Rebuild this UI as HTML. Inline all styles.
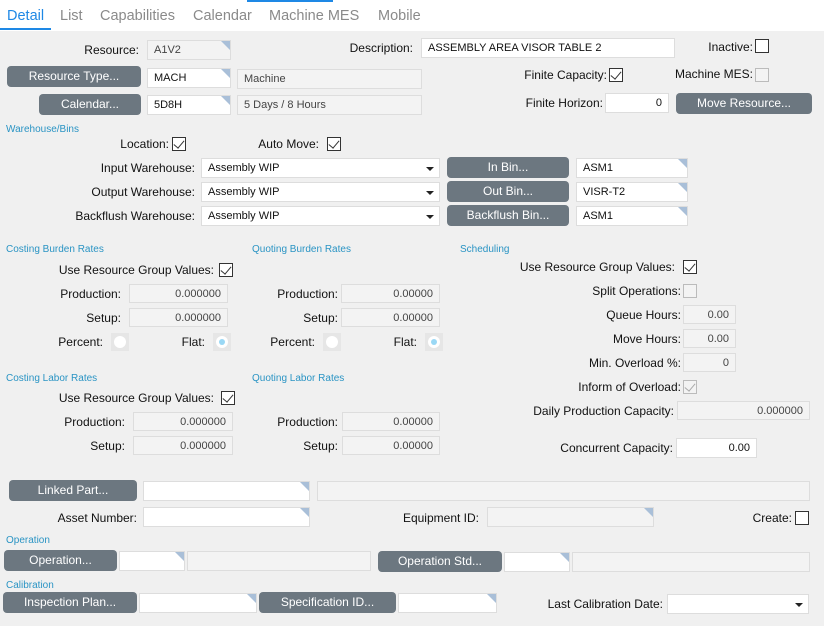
<!DOCTYPE html>
<html><head><meta charset="utf-8"><style>
*{box-sizing:border-box;margin:0;padding:0}
body{width:824px;height:626px;background:#f0f0f0;font-family:"Liberation Sans",sans-serif;font-size:12px;color:#111;position:relative;overflow:hidden}
.a{position:absolute}
.tabs{left:0;top:0;width:824px;height:31px;background:#fff}
.tab{position:absolute;top:8px;font-size:14.5px;color:#8a8a8a}
.lb{position:absolute;height:20px;line-height:20px;white-space:nowrap;text-align:right}
.f{position:absolute;height:20px;border:1px solid #ddd;background:#fff;padding:0 6px;line-height:18px;font-size:11px;white-space:nowrap;overflow:hidden}
.g{background:#f3f3f3;color:#444}
.n{text-align:right}
.t::after{content:"";position:absolute;right:0;top:0;border-top:9px solid #a9bfd8;border-left:9px solid transparent}
.b{position:absolute;height:21px;background:#6c7780;color:#fff;border-radius:4px;text-align:center;line-height:21px;font-size:12px}
.cb{position:absolute;width:14px;height:14px;border:1px solid #333;background:#fff}
.cb.d{border-color:#bbb;background:#f3f3f3}
.ck::after{content:"";position:absolute;left:3px;top:0px;width:5px;height:9px;border-right:1.5px solid #333;border-bottom:1.5px solid #333;transform:rotate(40deg)}
.ck.d::after{border-color:#aaa}
.h{position:absolute;font-size:10px;color:#2a94c4}
.r{position:absolute;width:18px;height:18px;background:#e6e6e6}
.r::after{content:"";position:absolute;left:3px;top:3px;width:12px;height:12px;border-radius:50%;background:#fff}
.r.on::before{content:"";position:absolute;left:6px;top:6px;width:6px;height:6px;border-radius:50%;background:#9ad8f5;z-index:1}
.dd::after{content:"";position:absolute;right:5px;top:8px;border-top:4px solid #222;border-left:4px solid transparent;border-right:4px solid transparent}
</style></head><body>
<div class="a tabs"></div>
<div class="a" style="left:247px;top:0;width:86px;height:2px;background:#1e88e5"></div>
<div class="tab" style="left:7px;color:#1e88e5">Detail</div>
<div class="a" style="left:0;top:28px;width:51px;height:2px;background:#1e88e5"></div>
<div class="tab" style="left:60px">List</div>
<div class="tab" style="left:100px">Capabilities</div>
<div class="tab" style="left:193px">Calendar</div>
<div class="tab" style="left:269px">Machine MES</div>
<div class="tab" style="left:378px">Mobile</div>

<div class="lb" style="right:685px;top:40px">Resource:</div>
<div class="f g t" style="left:147px;top:40px;width:84px">A1V2</div>
<div class="lb" style="right:411px;top:38px">Description:</div>
<div class="f" style="left:421px;top:38px;width:254px">ASSEMBLY AREA VISOR TABLE 2</div>
<div class="lb" style="right:71px;top:37px">Inactive:</div>
<div class="cb" style="left:755px;top:39px"></div>

<div class="b" style="left:7px;top:66px;width:134px">Resource Type...</div>
<div class="f t" style="left:147px;top:68px;width:84px">MACH</div>
<div class="f g" style="left:237px;top:69px;width:185px">Machine</div>
<div class="lb" style="right:217px;top:65px">Finite Capacity:</div>
<div class="cb ck" style="left:609px;top:68px"></div>
<div class="lb" style="right:71px;top:64px">Machine MES:</div>
<div class="cb d" style="left:755px;top:68px"></div>

<div class="b" style="left:39px;top:94px;width:102px">Calendar...</div>
<div class="f t" style="left:147px;top:95px;width:84px">5D8H</div>
<div class="f g" style="left:237px;top:95px;width:185px">5 Days / 8 Hours</div>
<div class="lb" style="right:221px;top:93px">Finite Horizon:</div>
<div class="f n" style="left:605px;top:93px;width:64px">0</div>
<div class="b" style="left:676px;top:93px;width:136px">Move Resource...</div>

<div class="h" style="left:6px;top:124px">Warehouse/Bins</div>
<div class="lb" style="right:655px;top:134px">Location:</div>
<div class="cb ck" style="left:172px;top:137px"></div>
<div class="lb" style="right:505px;top:134px">Auto Move:</div>
<div class="cb ck" style="left:327px;top:137px"></div>

<div class="lb" style="right:629px;top:158px">Input Warehouse:</div>
<div class="f dd" style="left:201px;top:158px;width:239px">Assembly WIP</div>
<div class="b" style="left:447px;top:157px;width:122px">In Bin...</div>
<div class="f t" style="left:576px;top:158px;width:112px">ASM1</div>
<div class="lb" style="right:629px;top:182px">Output Warehouse:</div>
<div class="f dd" style="left:201px;top:182px;width:239px">Assembly WIP</div>
<div class="b" style="left:447px;top:181px;width:122px">Out Bin...</div>
<div class="f t" style="left:576px;top:182px;width:112px">VISR-T2</div>
<div class="lb" style="right:629px;top:206px">Backflush Warehouse:</div>
<div class="f dd" style="left:201px;top:206px;width:239px">Assembly WIP</div>
<div class="b" style="left:447px;top:205px;width:122px">Backflush Bin...</div>
<div class="f t" style="left:576px;top:206px;width:112px">ASM1</div>

<div class="h" style="left:6px;top:244px">Costing Burden Rates</div>
<div class="h" style="left:252px;top:244px">Quoting Burden Rates</div>
<div class="h" style="left:460px;top:244px">Scheduling</div>
<div class="lb" style="right:610px;top:260px">Use Resource Group Values:</div>
<div class="cb ck" style="left:219px;top:263px"></div>
<div class="lb" style="right:703px;top:284px">Production:</div>
<div class="f g n" style="left:129px;top:284px;width:99px;height:19px">0.000000</div>
<div class="lb" style="right:703px;top:308px">Setup:</div>
<div class="f g n" style="left:129px;top:308px;width:99px;height:19px">0.000000</div>
<div class="lb" style="right:721px;top:332px">Percent:</div>
<div class="r" style="left:111px;top:333px"></div>
<div class="lb" style="right:619px;top:332px">Flat:</div>
<div class="r on" style="left:213px;top:333px"></div>
<div class="lb" style="right:486px;top:284px">Production:</div>
<div class="f g n" style="left:341px;top:284px;width:99px;height:19px">0.00000</div>
<div class="lb" style="right:486px;top:308px">Setup:</div>
<div class="f g n" style="left:341px;top:308px;width:99px;height:19px">0.00000</div>
<div class="lb" style="right:509px;top:332px">Percent:</div>
<div class="r" style="left:323px;top:333px"></div>
<div class="lb" style="right:407px;top:332px">Flat:</div>
<div class="r on" style="left:425px;top:333px"></div>

<div class="lb" style="right:149px;top:257px">Use Resource Group Values:</div>
<div class="cb ck" style="left:683px;top:260px"></div>
<div class="lb" style="right:143px;top:281px">Split Operations:</div>
<div class="cb d" style="left:683px;top:284px"></div>
<div class="lb" style="right:143px;top:305px">Queue Hours:</div>
<div class="f g n" style="left:683px;top:305px;width:53px;height:19px">0.00</div>
<div class="lb" style="right:143px;top:329px">Move Hours:</div>
<div class="f g n" style="left:683px;top:329px;width:53px;height:19px">0.00</div>
<div class="lb" style="right:143px;top:353px">Min. Overload %:</div>
<div class="f g n" style="left:683px;top:353px;width:53px;height:19px">0</div>
<div class="lb" style="right:143px;top:377px">Inform of Overload:</div>
<div class="cb d ck" style="left:683px;top:380px"></div>
<div class="lb" style="right:150px;top:401px">Daily Production Capacity:</div>
<div class="f g n" style="left:677px;top:401px;width:133px;height:19px">0.000000</div>
<div class="lb" style="right:151px;top:438px">Concurrent Capacity:</div>
<div class="f n" style="left:676px;top:438px;width:81px">0.00</div>

<div class="h" style="left:6px;top:373px">Costing Labor Rates</div>
<div class="h" style="left:252px;top:373px">Quoting Labor Rates</div>
<div class="lb" style="right:610px;top:388px">Use Resource Group Values:</div>
<div class="cb ck" style="left:221px;top:391px"></div>
<div class="lb" style="right:699px;top:412px">Production:</div>
<div class="f g n" style="left:133px;top:412px;width:100px;height:19px">0.000000</div>
<div class="lb" style="right:699px;top:436px">Setup:</div>
<div class="f g n" style="left:133px;top:436px;width:100px;height:19px">0.000000</div>
<div class="lb" style="right:486px;top:412px">Production:</div>
<div class="f g n" style="left:342px;top:412px;width:98px;height:19px">0.00000</div>
<div class="lb" style="right:486px;top:436px">Setup:</div>
<div class="f g n" style="left:342px;top:436px;width:98px;height:19px">0.00000</div>

<div class="b" style="left:9px;top:480px;width:128px">Linked Part...</div>
<div class="f t" style="left:143px;top:481px;width:167px"></div>
<div class="f g" style="left:317px;top:481px;width:493px"></div>
<div class="lb" style="right:687px;top:508px">Asset Number:</div>
<div class="f t" style="left:143px;top:507px;width:167px"></div>
<div class="lb" style="right:345px;top:508px">Equipment ID:</div>
<div class="f g t" style="left:487px;top:507px;width:167px"></div>
<div class="lb" style="right:32px;top:508px">Create:</div>
<div class="cb" style="left:795px;top:511px"></div>

<div class="h" style="left:6px;top:535px">Operation</div>
<div class="b" style="left:4px;top:550px;width:113px">Operation...</div>
<div class="f t" style="left:119px;top:551px;width:66px"></div>
<div class="f g" style="left:187px;top:551px;width:184px"></div>
<div class="b" style="left:378px;top:551px;width:124px">Operation Std...</div>
<div class="f t" style="left:504px;top:552px;width:66px"></div>
<div class="f g" style="left:572px;top:552px;width:238px"></div>

<div class="h" style="left:6px;top:580px">Calibration</div>
<div class="b" style="left:3px;top:592px;width:134px">Inspection Plan...</div>
<div class="f t" style="left:139px;top:593px;width:118px"></div>
<div class="b" style="left:259px;top:592px;width:137px">Specification ID...</div>
<div class="f t" style="left:398px;top:593px;width:99px"></div>
<div class="lb" style="right:161px;top:594px">Last Calibration Date:</div>
<div class="f dd" style="left:667px;top:594px;width:142px"></div>
</body></html>
